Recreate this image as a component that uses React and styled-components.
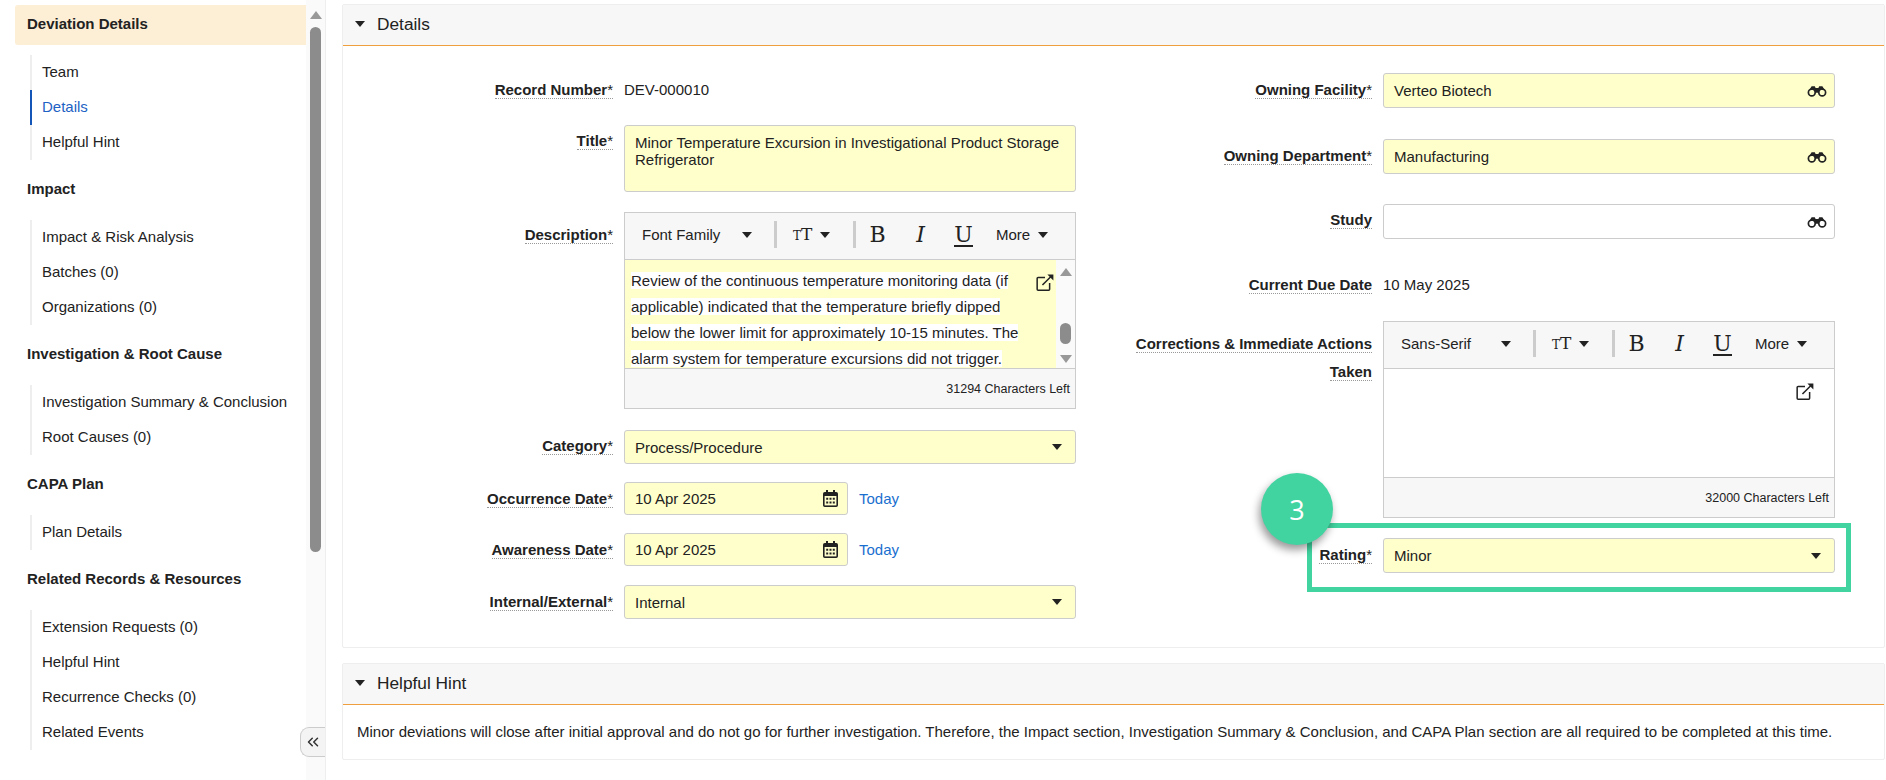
import React from "react";
import styled, { createGlobalStyle } from "styled-components";
import { ChevronsLeft } from "lucide-react";

const GlobalStyle = createGlobalStyle`
  html, body {
    margin: 0;
    height: 100%;
    overflow: hidden;
    background: #fff;
    color: #222;
    font-family: "Liberation Sans", Arial, sans-serif;
    font-size: 15px;
  }
`;

const Page = styled.div`
  display: flex;
  height: 780px;
`;

/* sidebar */
const Sidebar = styled.aside`
  position: relative;
  display: flex;
  width: 325px;
  flex: none;
  border-right: 1px solid #eee;
  overflow: hidden;
`;

const Nav = styled.nav`
  flex: 1;
  padding: 5px 0 0 15px;
`;

const NavHeading = styled.div`
  height: 40px;
  line-height: 38px;
  padding-left: 12px;
  margin-bottom: 10px;
  font-weight: bold;
  border-radius: 3px 0 0 3px;
  background: ${(p) => (p.$active ? "#fdeed6" : "transparent")};
`;

const NavList = styled.div`
  margin: 0 0 10px 15px;
`;

const NavItem = styled.div`
  height: 35px;
  line-height: 34px;
  padding-left: 10px;
  border-left: 2px solid ${(p) => (p.$active ? "#1456b8" : "#eee")};
  color: ${(p) => (p.$active ? "#1d62c4" : "#222")};
`;

const ScrollTrack = styled.div`
  width: ${(p) => p.$w || 19}px;
  flex: none;
  display: flex;
  flex-direction: column;
  align-items: center;
  padding-top: ${(p) => p.$top || 8}px;
  box-sizing: border-box;
  background: #fafafa;
`;

const ScrollArrow = styled.div`
  width: 0;
  height: 0;
  flex: none;
  margin-top: ${(p) => p.$mt || 0}px;
  border-left: 6.5px solid transparent;
  border-right: 6.5px solid transparent;
  ${(p) =>
    p.$down ? "border-top: 8px solid #999;" : "border-bottom: 8px solid #999;"}
`;

const ScrollThumb = styled.div`
  width: 11px;
  flex: none;
  height: ${(p) => p.$h}px;
  margin-top: ${(p) => p.$mt}px;
  border-radius: 6px;
  background: #8c8c8c;
`;

const CollapseButton = styled.button`
  position: absolute;
  right: 0;
  top: 727px;
  width: 25px;
  height: 30px;
  padding: 0;
  display: flex;
  align-items: center;
  justify-content: center;
  border: 1px solid #ccc;
  border-right: 0;
  border-radius: 9px 0 0 9px;
  background: #f4f4f4;
  color: #333;
`;

/* main area */
const Main = styled.main`
  flex: 1;
  min-width: 0;
  padding: 4px 1px 0 16px;
`;

const Panel = styled.section`
  border: 1px solid #eee;
  border-radius: 2px;
  margin-bottom: 15px;
`;

const PanelHeader = styled.header`
  height: 38px;
  padding: 0 0 2px 12px;
  display: flex;
  align-items: center;
  gap: 12px;
  background: #f7f7f7;
  border-bottom: 1.5px solid #ef9f3e;
  font-size: 17.3px;
`;

const Caret = styled.span`
  display: inline-block;
  flex: none;
  width: 0;
  height: 0;
  border-left: 5.5px solid transparent;
  border-right: 5.5px solid transparent;
  border-top: 6px solid #222;
`;

const FormGrid = styled.div`
  display: flex;
  gap: 48px;
  padding: 27px 49px 28px 22px;
`;

const Column = styled.div`
  flex: 711px 0 0;
  min-width: 0;
`;

const Row = styled.div`
  position: relative;
  display: grid;
  grid-template-columns: 248px 1fr;
  column-gap: 11px;
  margin-bottom: ${(p) => p.$mb || 0}px;
`;

const Label = styled.div`
  text-align: right;
  font-weight: bold;
  line-height: 28px;
  padding-top: ${(p) => (p.$top === undefined ? 3 : p.$top)}px;
`;

const LabelText = styled.span`
  border-bottom: 1px dotted #999;
`;

const Star = styled.span`
  font-weight: normal;
`;

const PlainValue = styled.div`
  height: 35px;
  line-height: 33px;
`;

const Input = styled.div`
  display: flex;
  align-items: center;
  justify-content: space-between;
  box-sizing: border-box;
  height: ${(p) => p.$h || 35}px;
  padding: 0 ${(p) => p.$pr || 13}px 0 10px;
  border: 1px solid #ccc;
  border-radius: 3px;
  background: ${(p) => (p.$plain ? "#fff" : "#ffffcc")};
  ${(p) => p.$w && `width: ${p.$w}px;`}
`;

const TextBox = styled.div`
  box-sizing: border-box;
  height: 67px;
  padding: 8px 10px;
  line-height: 17px;
  border: 1px solid #ccc;
  border-radius: 3px;
  background: #ffffcc;
`;

const DateRow = styled.div`
  display: flex;
  align-items: center;
  gap: 11px;
`;

const TodayLink = styled.a`
  color: #1a6fcf;
`;

/* rich text editor */
const Editor = styled.div`
  border: 1px solid #ccc;
`;

const Toolbar = styled.div`
  display: flex;
  align-items: center;
  height: 43px;
  padding-bottom: 3px;
  background: #f7f7f7;
  border-bottom: 1px solid #ccc;
`;

const FontSelect = styled.div`
  box-sizing: border-box;
  width: 149px;
  display: flex;
  align-items: center;
  justify-content: space-between;
  padding: 0 22px 0 17px;
`;

const ToolbarSep = styled.div`
  width: 3px;
  height: 27px;
  background: #ccc;
`;

const SizeButton = styled.div`
  box-sizing: border-box;
  width: 76px;
  display: flex;
  align-items: center;
  padding-left: 16px;
  gap: 8px;
`;

const SizeGlyph = styled.span`
  display: flex;
  align-items: baseline;
  font-family: "DejaVu Serif", serif;
  font-size: ${(p) => p.$size}px;
  line-height: 18px;
`;

const FormatButton = styled.div`
  width: 43px;
  flex: none;
  text-align: center;
  font-family: "DejaVu Serif", serif;
  font-size: 22px;
  line-height: 24px;
  font-style: ${(p) => (p.$italic ? "italic" : "normal")};
`;

const Underlined = styled.span`
  display: inline-block;
  line-height: 20px;
  border-bottom: 2px solid #222;
`;

const MoreButton = styled.div`
  display: flex;
  align-items: center;
  gap: 8px;
  margin-left: 11px;
`;

const EditorBody = styled.div`
  position: relative;
  display: flex;
  height: 108px;
  overflow: hidden;
  background: ${(p) => (p.$filled ? "#ffffcc" : "#fff")};
`;

const EditorText = styled.div`
  flex: 1;
  padding: 8px 30px 0 6px;
  line-height: 26px;
`;

const Mark = styled.span`
  background: #fff;
`;

const PopOut = styled.svg`
  position: absolute;
  top: 14px;
  right: ${(p) => p.$right}px;
`;

const EditorFooter = styled.div`
  height: 39px;
  line-height: 40px;
  padding-right: 5px;
  text-align: right;
  font-size: 12.5px;
  background: #f7f7f7;
  border-top: 1px solid #ccc;
`;

/* annotation around the rating field */
const Highlight = styled.div`
  position: absolute;
  left: 183px;
  right: -16px;
  top: -15px;
  bottom: -19px;
  border: 5px solid #41d3a0;
  pointer-events: none;
`;

const Badge = styled.div`
  position: absolute;
  left: 137px;
  top: -65px;
  width: 72px;
  height: 72px;
  display: flex;
  align-items: center;
  justify-content: center;
  border-radius: 50%;
  background: #41d3a0;
  color: #fff;
  font-family: "Open Sans", sans-serif;
  font-size: 27px;
  box-shadow: -2px 5px 9px rgba(0, 0, 0, 0.4);
`;

const HintBody = styled.div`
  height: 54px;
  line-height: 54px;
  padding-left: 14px;
  white-space: nowrap;
`;

const Binoculars = () => (
  <svg width="20" height="12" viewBox="0 0 20 12" fill="none">
    <circle cx="4.8" cy="7.4" r="3.4" stroke="#222" strokeWidth="1.7" />
    <circle cx="15.2" cy="7.4" r="3.4" stroke="#222" strokeWidth="1.7" />
    <path d="M2 5.5 4.6 1.2h3.2L8.6 3h2.8l.8-1.8h3.2L18 5.5 13 4.6l-1.4 3.2H8.4L7 4.6z" fill="#222" />
  </svg>
);

const Calendar = () => (
  <svg width="15" height="17" viewBox="0 0 15 17">
    <path d="M3 0h2v2h5V0h2v2h1.2A1.8 1.8 0 0 1 15 3.8v11.4a1.8 1.8 0 0 1-1.8 1.8H1.8A1.8 1.8 0 0 1 0 15.2V3.8A1.8 1.8 0 0 1 1.8 2H3z" fill="#222" />
    <rect x="1.6" y="6" width="11.8" height="9.4" fill="#ffffcc" />
    <path d="M3.2 7.8h2v2h-2zM6.5 7.8h2v2h-2zM9.8 7.8h2v2h-2zM3.2 11.4h2v2h-2zM6.5 11.4h2v2h-2zM9.8 11.4h2v2h-2z" fill="#222" />
  </svg>
);

const PopOutIcon = ({ right }) => (
  <PopOut $right={right} width="18" height="17" viewBox="0 0 19 18" fill="none">
    <path d="M9.5 3.6H2.2a1 1 0 0 0-1 1v11.6a1 1 0 0 0 1 1h11.2a1 1 0 0 0 1-1V9.5" stroke="#222" strokeWidth="1.6" />
    <path d="M6.8 11.6 16.6 1.8" stroke="#222" strokeWidth="1.6" />
    <path d="M12 .6h6.4V7z" fill="#222" />
  </PopOut>
);

const FieldLabel = ({ text, required, top }) => (
  <Label $top={top}>
    <LabelText>
      {text}
      {required && <Star>*</Star>}
    </LabelText>
  </Label>
);

const EditorToolbar = ({ font }) => (
  <Toolbar>
    <FontSelect>
      {font}
      <Caret />
    </FontSelect>
    <ToolbarSep />
    <SizeButton>
      <SizeGlyph $size={17}>
        <SizeGlyph as="span" $size={12}>T</SizeGlyph>T
      </SizeGlyph>
      <Caret />
    </SizeButton>
    <ToolbarSep />
    <FormatButton>B</FormatButton>
    <FormatButton $italic>I</FormatButton>
    <FormatButton>
      <Underlined>U</Underlined>
    </FormatButton>
    <MoreButton>
      More
      <Caret />
    </MoreButton>
  </Toolbar>
);

const navSections = [
  { title: "Deviation Details", active: true, items: ["Team", "Details", "Helpful Hint"] },
  { title: "Impact", items: ["Impact & Risk Analysis", "Batches (0)", "Organizations (0)"] },
  { title: "Investigation & Root Cause", items: ["Investigation Summary & Conclusion", "Root Causes (0)"] },
  { title: "CAPA Plan", items: ["Plan Details"] },
  { title: "Related Records & Resources", items: ["Extension Requests (0)", "Helpful Hint", "Recurrence Checks (0)", "Related Events"] },
];

export default function App() {
  return (
    <Page>
      <GlobalStyle />
      <Sidebar>
        <Nav>
          {navSections.map((section) => (
            <div key={section.title}>
              <NavHeading $active={section.active}>{section.title}</NavHeading>
              <NavList>
                {section.items.map((item) => (
                  <NavItem key={item} $active={section.active && item === "Details"}>
                    {item}
                  </NavItem>
                ))}
              </NavList>
            </div>
          ))}
        </Nav>
        <ScrollTrack $top={11}>
          <ScrollArrow />
          <ScrollThumb $mt={8} $h={525} />
        </ScrollTrack>
        <CollapseButton aria-label="Collapse">
          <ChevronsLeft size={18} strokeWidth={2} />
        </CollapseButton>
      </Sidebar>

      <Main>
        <Panel>
          <PanelHeader>
            <Caret />
            Details
          </PanelHeader>
          <FormGrid>
            <Column>
              <Row $mb={17}>
                <FieldLabel text="Record Number" required />
                <PlainValue>DEV-000010</PlainValue>
              </Row>
              <Row $mb={20}>
                <FieldLabel text="Title" required top={2} />
                <TextBox>Minor Temperature Excursion in Investigational Product Storage Refrigerator</TextBox>
              </Row>
              <Row $mb={21}>
                <FieldLabel text="Description" required top={9} />
                <Editor>
                  <EditorToolbar font="Font Family" />
                  <EditorBody $filled>
                    <EditorText>
                      <Mark>
                        Review of the continuous temperature monitoring data (if applicable) indicated that the
                        temperature briefly dipped below the lower limit for approximately 10-15 minutes. The alarm
                        system for temperature excursions did not trigger.
                      </Mark>
                    </EditorText>
                    <PopOutIcon right={21} />
                    <ScrollTrack>
                      <ScrollArrow />
                      <ScrollThumb $mt={47} $h={21} />
                      <ScrollArrow $down $mt={11} />
                    </ScrollTrack>
                  </EditorBody>
                  <EditorFooter>31294 Characters Left</EditorFooter>
                </Editor>
              </Row>
              <Row $mb={18}>
                <FieldLabel text="Category" required top={2} />
                <Input $h={34}>
                  Process/Procedure
                  <Caret />
                </Input>
              </Row>
              <Row $mb={18}>
                <FieldLabel text="Occurrence Date" required />
                <DateRow>
                  <Input $h={33} $w={224} $pr={9}>
                    10 Apr 2025
                    <Calendar />
                  </Input>
                  <TodayLink>Today</TodayLink>
                </DateRow>
              </Row>
              <Row $mb={19}>
                <FieldLabel text="Awareness Date" required />
                <DateRow>
                  <Input $h={33} $w={224} $pr={9}>
                    10 Apr 2025
                    <Calendar />
                  </Input>
                  <TodayLink>Today</TodayLink>
                </DateRow>
              </Row>
              <Row>
                <FieldLabel text="Internal/External" required />
                <Input $h={34}>
                  Internal
                  <Caret />
                </Input>
              </Row>
            </Column>

            <Column>
              <Row $mb={31}>
                <FieldLabel text="Owning Facility" required />
                <Input $pr={7}>
                  Verteo Biotech
                  <Binoculars />
                </Input>
              </Row>
              <Row $mb={30}>
                <FieldLabel text="Owning Department" required />
                <Input $pr={7}>
                  Manufacturing
                  <Binoculars />
                </Input>
              </Row>
              <Row $mb={29}>
                <FieldLabel text="Study" top={2} />
                <Input $plain $pr={7}>
                  <span />
                  <Binoculars />
                </Input>
              </Row>
              <Row $mb={18}>
                <FieldLabel text="Current Due Date" />
                <PlainValue>10 May 2025</PlainValue>
              </Row>
              <Row $mb={20}>
                <FieldLabel text="Corrections & Immediate Actions Taken" top={9} />
                <Editor>
                  <EditorToolbar font="Sans-Serif" />
                  <EditorBody>
                    <PopOutIcon right={20} />
                  </EditorBody>
                  <EditorFooter>32000 Characters Left</EditorFooter>
                </Editor>
              </Row>
              <Row>
                <FieldLabel text="Rating" required />
                <Input>
                  Minor
                  <Caret />
                </Input>
                <Highlight />
                <Badge>3</Badge>
              </Row>
            </Column>
          </FormGrid>
        </Panel>

        <Panel>
          <PanelHeader>
            <Caret />
            Helpful Hint
          </PanelHeader>
          <HintBody>
            Minor deviations will close after initial approval and do not go for further investigation. Therefore, the
            Impact section, Investigation Summary &amp; Conclusion, and CAPA Plan section are all required to be
            completed at this time.
          </HintBody>
        </Panel>
      </Main>
    </Page>
  );
}
